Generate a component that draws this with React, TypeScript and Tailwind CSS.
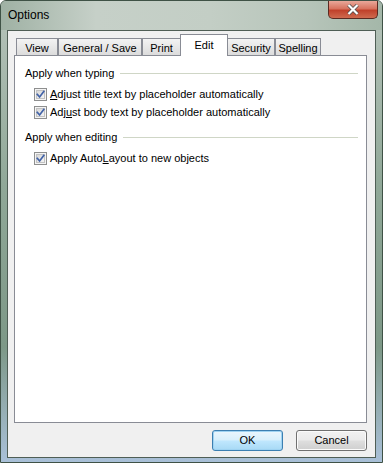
import React from "react";

const font = { fontFamily: '"Liberation Sans", Arial, sans-serif' };

function Check() {
  return (
    <svg width="13" height="13" viewBox="0 0 13 13" className="shrink-0">
      <defs>
        <linearGradient id="cbg" x1="0" y1="0" x2="1" y2="1">
          <stop offset="0" stopColor="#d6d6d6" />
          <stop offset="1" stopColor="#f6f6f6" />
        </linearGradient>
      </defs>
      <rect x="0.5" y="0.5" width="12" height="12" fill="#f4f4f4" stroke="#8e8f8f" />
      <rect x="2.5" y="2.5" width="8" height="8" fill="url(#cbg)" stroke="#c2c2c2" />
      <path d="M3.3 6.4 L5.6 9 L9.8 3.4" stroke="#4263a8" strokeWidth="1.7" fill="none" strokeLinecap="square" />
    </svg>
  );
}

function Row({ children }: { children: React.ReactNode }) {
  return (
    <div className="flex items-center h-[18px] pl-[9px] gap-[3px] text-[11px] text-black">
      <Check />
      <span>{children}</span>
    </div>
  );
}

function Section({ title }: { title: string }) {
  return (
    <div className="flex items-center h-[15px] text-[11px] text-black">
      <span>{title}</span>
      <div className="flex-1 h-px bg-[#cfd6c6] ml-[6px]" />
    </div>
  );
}

function Tab({ label, w, selected }: { label: string; w: string; selected?: boolean }) {
  if (selected) {
    return (
      <div
        className={`${w} h-[22px] -mb-px -mx-[1px] relative z-10 bg-white border border-b-0 border-[#898c95] flex justify-center pt-[2px] text-[11px] text-black`}
      >
        {label}
      </div>
    );
  }
  return (
    <div
      className={`${w} h-[17px] border border-b-0 border-[#898c95] bg-gradient-to-b from-[#f3f3f3] to-[#dcdcdc] flex items-center justify-center pt-[2px] text-[11px] text-black`}
    >
      {label}
    </div>
  );
}

export default function App() {
  return (
    <div
      style={font}
      className="w-[383px] h-[463px] flex flex-col rounded-t-[6px] border border-[#3f5246] bg-[linear-gradient(180deg,#b7c4bb_0%,#90a898_40%,#7d9887_75%,#a9c0d8_100%)] overflow-hidden"
    >
      <div className="h-[29px] flex items-start justify-between pl-[7px] pr-[4px] bg-[linear-gradient(90deg,#9fb1a4_0%,#c6d0c8_25%,#c3cec5_55%,#b7c5ba_80%,#a4b7a9_100%)]">
        <span className="text-[12px] text-black mt-[7px] leading-[15px]">Options</span>
        <div className="w-[50px] h-[18px] rounded-b-[5px] border border-t-0 border-[#5a2a22] bg-[linear-gradient(180deg,#e9a89a_0%,#d7735f_45%,#c0412b_55%,#cf6a4f_100%)] flex items-center justify-center">
          <svg width="12" height="11" viewBox="0 0 12 11">
            <path d="M1.5 1 L10.5 10 M10.5 1 L1.5 10" stroke="#4a4a4a" strokeWidth="3.6" />
            <path d="M1.5 1 L10.5 10 M10.5 1 L1.5 10" stroke="#ffffff" strokeWidth="2.2" />
          </svg>
        </div>
      </div>
      <div className="flex-1 mx-[6px] mb-[4px] border border-[#4f5e55] bg-[#f0f0f0] flex flex-col pt-[3px] pl-[6px] pr-[8px]">
        <div className="flex items-end h-[21px] pl-[2px]">
          <Tab label="View" w="w-[42px]" />
          <Tab label="General / Save" w="w-[84px]" />
          <Tab label="Print" w="w-[39px]" />
          <Tab label="Edit" w="w-[48px]" selected />
          <Tab label="Security" w="w-[48px]" />
          <Tab label="Spelling" w="w-[46px]" />
        </div>
        <div className="h-[368px] border border-[#898c95] bg-white pt-[10px] pl-[10px] pr-[8px] flex flex-col">
          <Section title="Apply when typing" />
          <div className="h-[4px]" />
          <Row>
            <u>A</u>djust title text by placeholder automatically
          </Row>
          <Row>
            Adj<u>u</u>st body text by placeholder automatically
          </Row>
          <div className="h-[9px]" />
          <Section title="Apply when editing" />
          <div className="h-[4px]" />
          <Row>
            Apply Auto<u>L</u>ayout to new objects
          </Row>
        </div>
        <div className="flex justify-end gap-[13px] mt-[7px]">
          <button className="w-[71px] h-[21px] rounded-[3px] border border-[#3c7fb1] bg-[linear-gradient(180deg,#eaf6fd_0%,#d9f0fc_45%,#bee6fd_55%,#a7d9f5_100%)] text-[11px] text-black shadow-[inset_0_0_0_1px_#9fd3f2]">
            OK
          </button>
          <button className="w-[71px] h-[21px] rounded-[3px] border border-[#707070] bg-[linear-gradient(180deg,#f2f2f2_0%,#ebebeb_45%,#dddddd_55%,#cfcfcf_100%)] text-[11px] text-black shadow-[inset_0_0_0_1px_#fbfbfb]">
            Cancel
          </button>
        </div>
      </div>
    </div>
  );
}
